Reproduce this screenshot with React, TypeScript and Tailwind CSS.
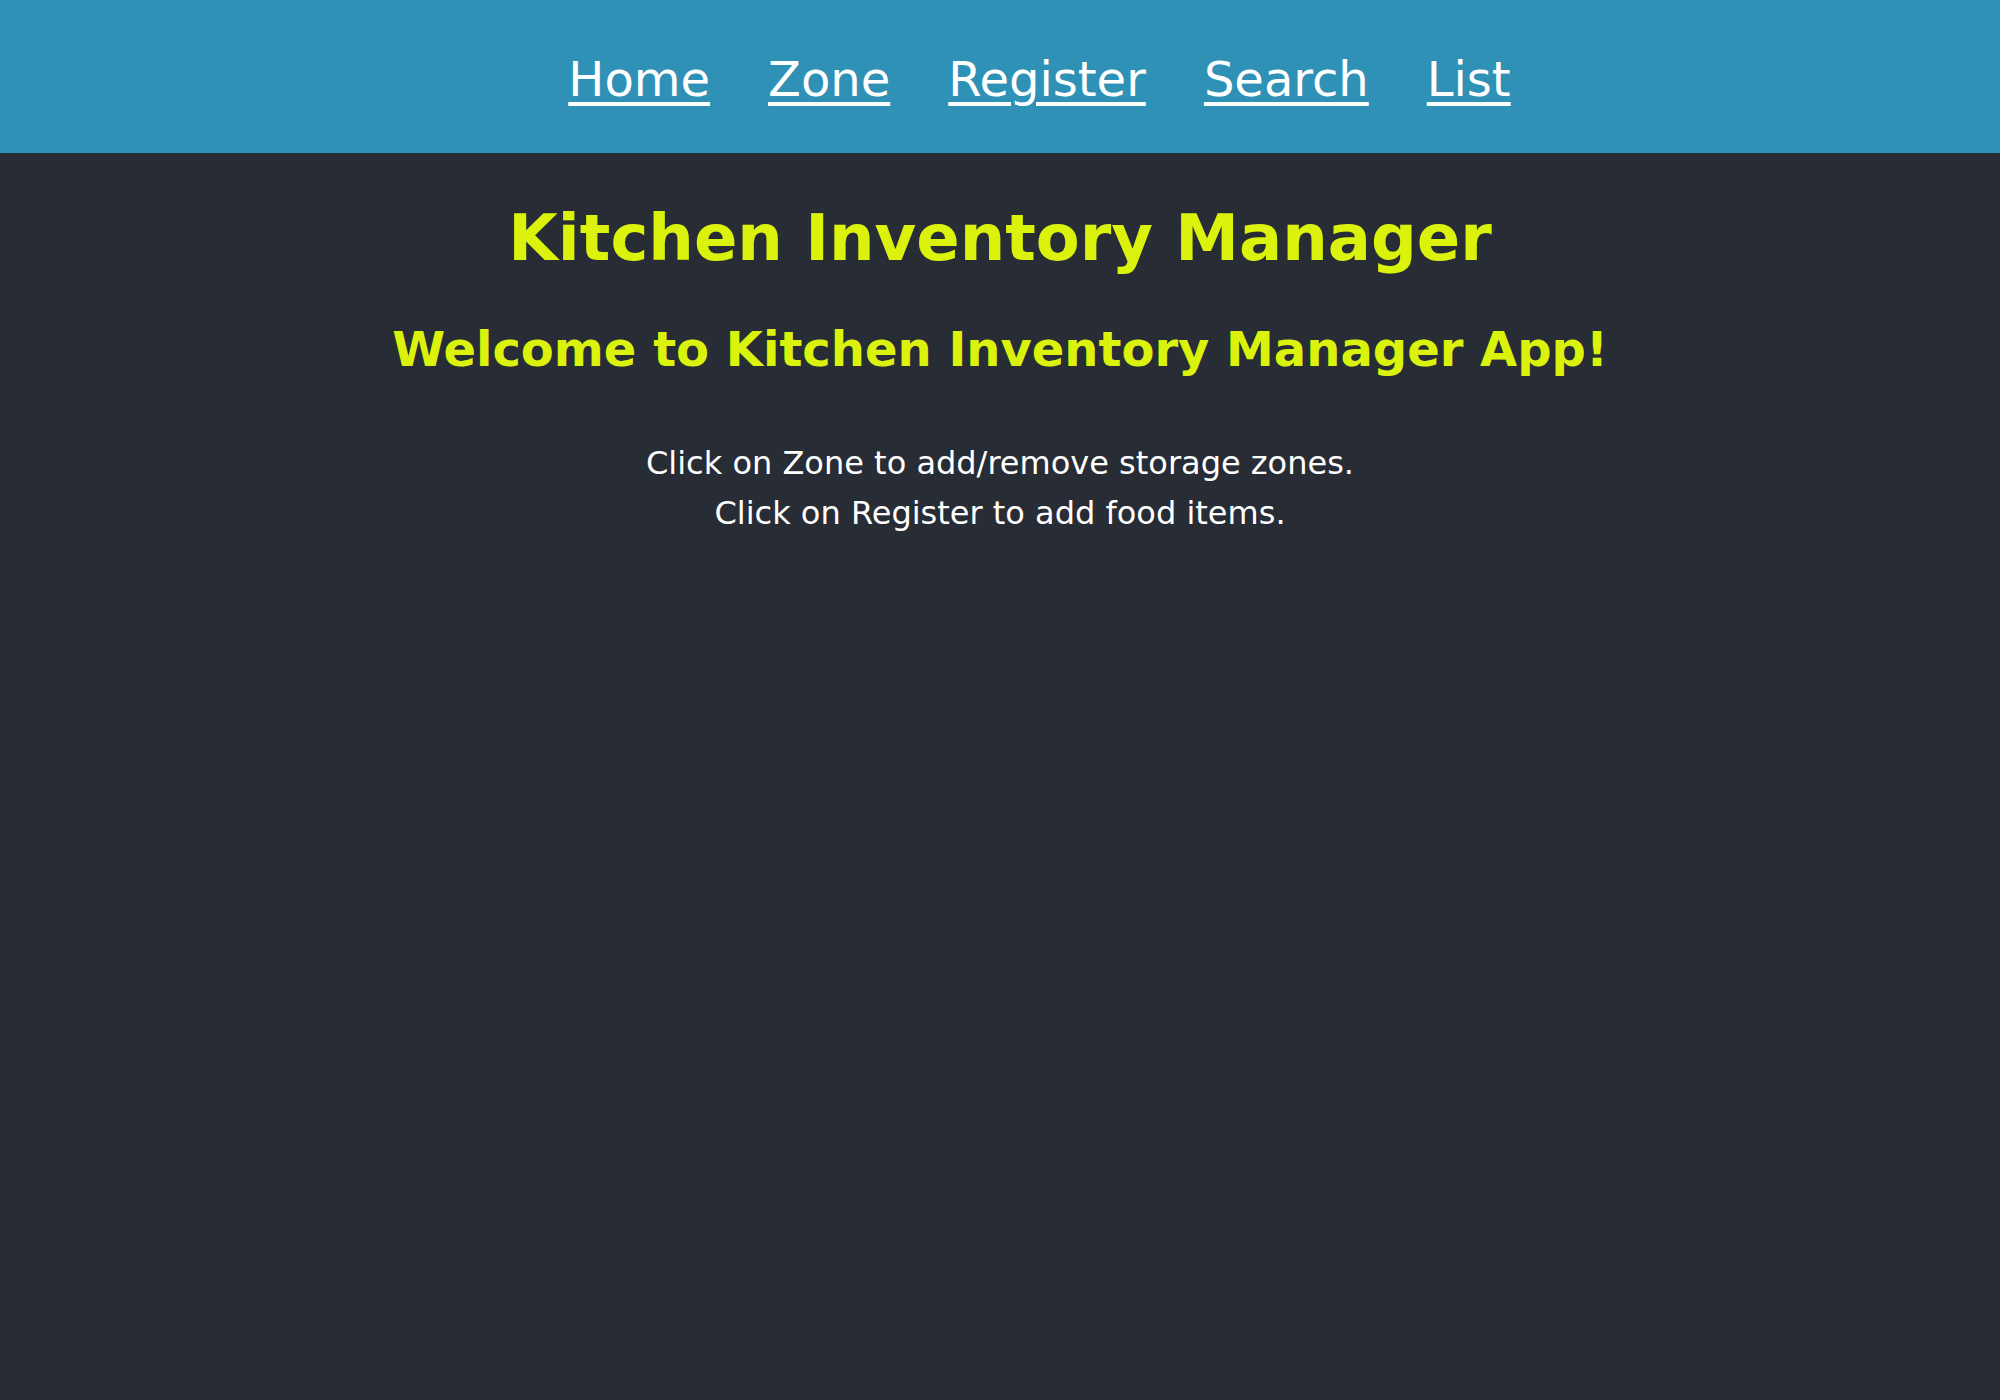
export default function App() {
  const links = ["Home", "Zone", "Register", "Search", "List"];
  return (
    <div className="min-h-screen bg-[#282c34] font-['DejaVu_Sans',sans-serif] text-center">
      {/* Nav bar */}
      <nav className="flex h-[153px] justify-center gap-[58px] bg-[#2f91b5] pl-[79px] pt-[51px]">
        {links.map((l) => (
          <a key={l} href="#" className="text-[48px] leading-[56px] text-white underline underline-offset-[6px] decoration-[4px]">
            {l}
          </a>
        ))}
      </nav>

      <h1 className="mt-[48px] text-[64px] font-bold leading-[75px] text-[#daf20c]">
        Kitchen Inventory Manager
      </h1>
      <h2 className="mt-[46px] text-[48px] font-bold leading-[54px] text-[#daf20c]">
        Welcome to Kitchen Inventory Manager App!
      </h2>

      <div className="mt-[62px] text-[32px] leading-[50px] text-white">
        <p>Click on Zone to add/remove storage zones.</p>
        <p>Click on Register to add food items.</p>
      </div>
    </div>
  );
}
